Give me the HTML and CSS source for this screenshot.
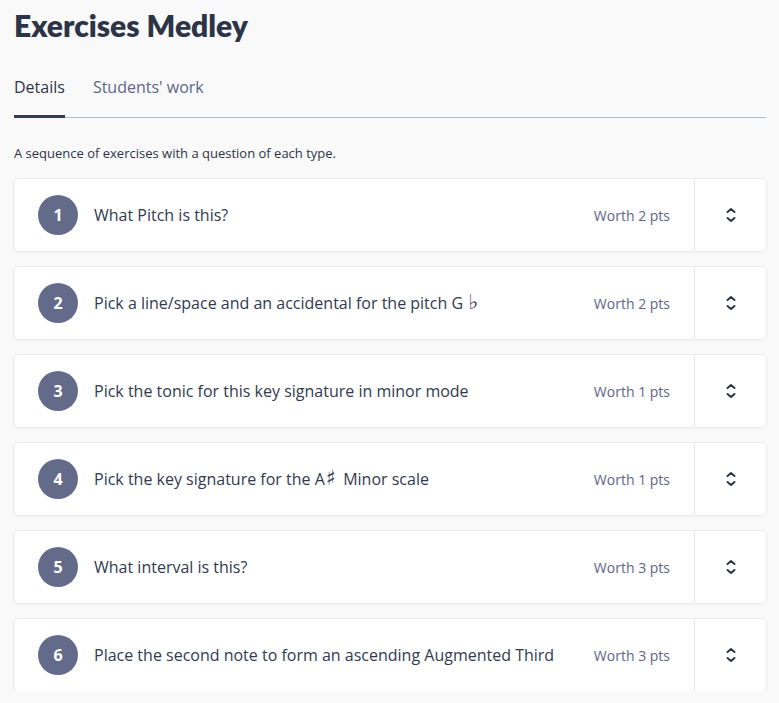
FILE: index.html
```html
<!DOCTYPE html>
<html>
<head>
<meta charset="utf-8">
<link rel="stylesheet" href="styles.css">
</head>
<body>
<div class="page">
  <h1 class="title">Exercises Medley</h1>
  <nav class="tabs">
    <span class="tab active">Details</span>
    <span class="tab">Students' work</span>
  </nav>
  <p class="desc">A sequence of exercises with a question of each type.</p>
  <ul class="list">
    <li class="card"><div class="main"><span class="num">1</span><span class="q">What Pitch is this?</span><span class="worth">Worth 2 pts</span></div><div class="toggle"><svg viewBox="0 0 12 16" width="12" height="16"><path d="M2.5 5 6 2 9.5 5M2.5 11 6 14 9.5 11" fill="none" stroke="#2f3547" stroke-width="2" stroke-linecap="round" stroke-linejoin="round"/></svg></div></li>
    <li class="card"><div class="main"><span class="num">2</span><span class="q">Pick a line/space and an accidental for the pitch G <span class="acc">♭</span></span><span class="worth">Worth 2 pts</span></div><div class="toggle"><svg viewBox="0 0 12 16" width="12" height="16"><path d="M2.5 5 6 2 9.5 5M2.5 11 6 14 9.5 11" fill="none" stroke="#2f3547" stroke-width="2" stroke-linecap="round" stroke-linejoin="round"/></svg></div></li>
    <li class="card"><div class="main"><span class="num">3</span><span class="q">Pick the tonic for this key signature in minor mode</span><span class="worth">Worth 1 pts</span></div><div class="toggle"><svg viewBox="0 0 12 16" width="12" height="16"><path d="M2.5 5 6 2 9.5 5M2.5 11 6 14 9.5 11" fill="none" stroke="#2f3547" stroke-width="2" stroke-linecap="round" stroke-linejoin="round"/></svg></div></li>
    <li class="card"><div class="main"><span class="num">4</span><span class="q">Pick the key signature for the A<span class="acc">♯</span> Minor scale</span><span class="worth">Worth 1 pts</span></div><div class="toggle"><svg viewBox="0 0 12 16" width="12" height="16"><path d="M2.5 5 6 2 9.5 5M2.5 11 6 14 9.5 11" fill="none" stroke="#2f3547" stroke-width="2" stroke-linecap="round" stroke-linejoin="round"/></svg></div></li>
    <li class="card"><div class="main"><span class="num">5</span><span class="q">What interval is this?</span><span class="worth">Worth 3 pts</span></div><div class="toggle"><svg viewBox="0 0 12 16" width="12" height="16"><path d="M2.5 5 6 2 9.5 5M2.5 11 6 14 9.5 11" fill="none" stroke="#2f3547" stroke-width="2" stroke-linecap="round" stroke-linejoin="round"/></svg></div></li>
    <li class="card"><div class="main"><span class="num">6</span><span class="q">Place the second note to form an ascending Augmented Third</span><span class="worth">Worth 3 pts</span></div><div class="toggle"><svg viewBox="0 0 12 16" width="12" height="16"><path d="M2.5 5 6 2 9.5 5M2.5 11 6 14 9.5 11" fill="none" stroke="#2f3547" stroke-width="2" stroke-linecap="round" stroke-linejoin="round"/></svg></div></li>
  </ul>
</div>
</body>
</html>
```
FILE: styles.css
```css
html, body { margin: 0; padding: 0; }
body {
  background: #f9f9f9;
  font-family: "Open Sans", "Noto Sans", sans-serif;
  color: #333a4e;
}
.page { padding: 0 13px 0 14px; }
.title {
  margin: 0;
  padding-top: 7px;
  font-family: "Lato", "Open Sans", sans-serif;
  font-weight: 800;
  font-size: 30px;
  line-height: 36px;
  color: #2e3448;
}
.tabs {
  margin-top: 33px;
  display: flex;
  gap: 28px;
  border-bottom: 1px solid #b7bbd0;
}
.tab {
  font-size: 16px;
  line-height: 22px;
  padding-bottom: 17px;
  color: #5d6588;
  border-bottom: 3px solid transparent;
  margin-bottom: -1px;
}
.tab.active { color: #2e3448; border-bottom-color: #353b50; }
.desc {
  margin: 26px 0 0;
  font-size: 13px;
  line-height: 18px;
  color: #2e3448;
}
.list {
  list-style: none;
  margin: 17px 0 0;
  padding: 0;
  display: flex;
  flex-direction: column;
  gap: 16px;
}
.card {
  display: flex;
  height: 72px;
  background: #fff;
  border-radius: 4px;
  box-shadow: 0 0 0 1px #ebebeb, 0 1px 3px rgba(0,0,0,0.08);
}
.main {
  flex: 1;
  display: flex;
  align-items: center;
  padding: 0 24px 0 24px;
}
.num {
  width: 40px;
  height: 40px;
  border-radius: 50%;
  background: #646b8a;
  color: #fff;
  font-weight: 700;
  font-size: 16px;
  display: flex;
  align-items: center;
  justify-content: center;
  flex: none;
}
.q {
  margin-left: 16px;
  flex: 1;
  font-size: 16px;
  color: #333a4e;
}
.acc { font-family: "DejaVu Sans", sans-serif; font-size: 21px; line-height: 16px; padding: 0 3px 0 1px; }
.worth {
  font-size: 14px;
  color: #5d6588;
}
.toggle {
  width: 71px;
  border-left: 1px solid #e6e6e6;
  display: flex;
  align-items: center;
  justify-content: center;
}
.toggle svg { display: block; }
```
